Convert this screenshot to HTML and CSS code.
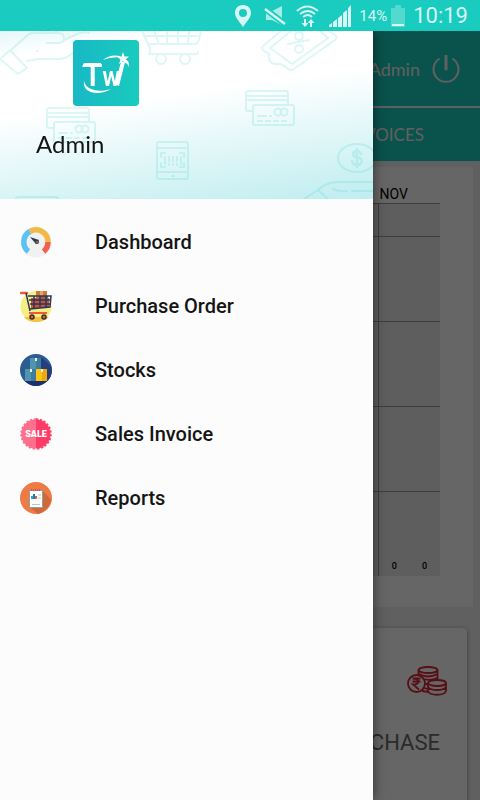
FILE: index.html
```html
<!DOCTYPE html>
<html lang="en">
<head>
<meta charset="utf-8">
<meta name="viewport" content="width=device-width, initial-scale=1">
<title>Admin</title>
<link rel="stylesheet" href="styles.css">
</head>
<body>
<div class="status">
  <svg class="pin" width="18" height="22" viewBox="0 0 18 22"><path fill-rule="evenodd" d="M9 0C4 0 1 3.600 1 8c0 5 5 9 8 14 3-5 8-9 8-14 0-4.400-3-8-8-8Zm0 4a4 4 0 1 1 0 8 4 4 0 0 1 0-8Z"/></svg>
  <svg class="mute" width="22" height="20" viewBox="0 0 22 20"><path d="M2 5h6l10-5v19L8 14H2Z" opacity=".75"/><path d="m0 2 21 16" stroke="#1accbf" stroke-width="6"/><path d="m1 3 20 15" stroke="#d6f7f4" stroke-width="2.500"/></svg>
  <svg class="wifi" width="24" height="24" viewBox="0 0 24 24"><g fill="none" stroke="#d6f7f4" stroke-width="2"><path d="M1 7q10-9 21 0M4 10q8-6 15 0M7 13q5-4 9 0"/><path d="M9 15v6M15 23v-6"/></g><path d="M5.500 19h7L9 23ZM11.500 19h7L15 15Z"/></svg>
  <svg class="signal" width="23" height="22" viewBox="0 0 23 22"><path d="M0 20l3-2v4H0ZM4 17l4-3v8H4ZM9 13l4-3v12h-4ZM14 8l4-3v17h-4ZM19 3l3-3v22h-3Z"/></svg>
  <span class="percent">14%</span>
  <svg class="battery" width="14" height="22" viewBox="0 0 14 22"><path opacity=".3" d="M4 0h6v3h4v19H0V3h4Z"/><path d="M1 19h12v2H1Z"/></svg>
  <time class="clock">10:19</time>
</div>

<div class="stage">
  <main class="page">
    <header class="topbar">
      <span>Admin</span>
      <button class="power" type="button" aria-label="Log out">
        <svg width="28" height="28" viewBox="0 0 28 28" fill="none" stroke="currentColor" stroke-width="2" stroke-linecap="round"><path d="M7 4a12.500 12.500 0 1 0 14 0"/><path d="M14 1v13" stroke-width="3"/></svg>
      </button>
    </header>
    <nav class="tabs"><a href="#invoices">INVOICES</a></nav>
    <section class="chart">
      <div class="month">NOV</div>
      <div class="plot">
        <div class="band first"></div>
        <div class="band"></div>
        <div class="band"></div>
        <div class="band"></div>
        <div class="band values"><span>0</span><span>0</span></div>
      </div>
    </section>
    <section class="card">
      <svg class="coins" width="40" height="30" viewBox="0 0 40 30" fill="none" stroke="#d92332" stroke-width="1.800">
        <ellipse cx="21" cy="4" rx="9.500" ry="3"/><path d="M11.500 4v5M30.500 4v9M12 8q9 5 18.500 0M16 13q8 2 14-1M18 18h3M17 22l4 1M15 25l7 1"/>
        <circle cx="9.500" cy="17.500" r="8.500"/><path d="M5.500 12.500h8M5.500 15.500h8M6 12.500c7 0 7 6 0 6l6 5"/>
        <ellipse cx="30" cy="17" rx="9" ry="3"/><path d="M21 17v8c2 5 16 5 18 0v-8M21 21c3 4 15 4 18 0"/>
      </svg>
      <h2>PURCHASE</h2>
    </section>
  </main>
  <div class="scrim"></div>

  <aside class="drawer">
    <header class="profile">
      <svg class="doodles" viewBox="0 0 373 168" preserveAspectRatio="xMinYMin slice" fill="none" stroke="#16c5bd" stroke-width="2" stroke-linecap="round" stroke-linejoin="round" aria-hidden="true">
        <defs>
          <g id="cards"><path d="M7 21H3q-2 0-2-2V3q0-2 2-2h38q2 0 2 2v11M1 6h42M1 10h42"/><rect x="8" y="15" width="41" height="20" rx="2"/><circle cx="33" cy="22" r="3.500"/><circle cx="39" cy="22" r="3.500"/><path d="M13 26h8M25 26h1M13 31h4M21 31h4M29 31h4M37 31h4"/></g>
        </defs>
        <g opacity=".15">
          <path d="M0 28l10-9 17 18-9 6L0 28M12 18l17-15q4-2 10-1h19q6 0 6 5t-6 5H47M38 20h-1M64 9l11-5q8-4 14-2M27 30l12-2h20q6 0 11-4l6-4M42 0q8 4 16 0"/>
          <path d="M142 0l8 17q1 4-1 6h42q7 1 7-2M149 13h46q3 0 4-4l2-9M154 0l5 13M167 0v13M178 0v13M189 0l-1 13M144 5h56"/>
          <circle cx="161" cy="28" r="5"/><circle cx="185" cy="28" r="5"/>
          <path d="M281 0l-18 15q-2 3 1 5l5 3q-2 10 9 10 5 0 10 5 3 2 6 0l41-29q3-3 0-5l-6-4M291 0l-21 17 22 16 36-26-8-7M288 13l21-4"/><circle cx="299" cy="5" r="4"/><circle cx="299" cy="18" r="4"/>
          <use href="#cards" x="46" y="76"/><use href="#cards" x="245" y="59"/><use href="#cards" x="15" y="165"/>
          <rect x="157" y="111" width="31" height="37" rx="2"/><path d="M157 117h31M157 141h31M172 145h2M161 126v-4h4M180 122h4v4M161 132v4h4M180 136h4v-4M165 126v7M169 126v4M173 126v4M177 126v4M181 126v7M169 133v1M173 133v1M177 133v1"/>
          <ellipse cx="357" cy="127" rx="19" ry="14"/><path stroke-width="2.500" d="M361 123q-1-3-4-3-4 0-4 3c0 5 9 2 9 7q-1 4-5 4-4 0-5-4M357 118v18"/>
          <path d="M304 168l14-9q8-8 21-8h34M318 159l10 9M333 158q6 3 14 2M352 160h21M345 160h1"/>
        </g>
      </svg>
      <svg class="logo" width="66" height="66" viewBox="0 0 66 66" role="img" aria-label="TW">
        <defs><linearGradient id="tile" x1="0" x2="1"><stop stop-color="#18b9c5"/><stop offset="1" stop-color="#19cbbd"/></linearGradient></defs>
        <rect width="66" height="66" rx="4" fill="url(#tile)"/>
        <text x="10" y="46" class="letters"><tspan class="letter-t">T</tspan><tspan class="letter-w">W</tspan></text>
        <path fill="#fff" d="M9 27l2-4h17v4ZM42 44l6-22h4L46 46ZM11 41c2 9 14 12 27 8-11 7-29 5-27-8ZM30 20q7-6 17-4v1.500q-9-1-17 2.500ZM52 19q5 2 4 8-2-5-7-6Z"/>
        <path fill="#fff" d="M50 12l1.500 4.500 4.500 0-3.500 3 1.500 4.500-4-3-4 3 1.500-4.500-3.500-3h4.500Z"/>
      </svg>
      <div class="name">Admin</div>
    </header>
    <nav class="menu">
      <a href="#dashboard">
        <svg viewBox="0 0 32 32"><circle cx="16" cy="16" r="15.500" fill="#f1f1f2"/><g fill="none" stroke-width="5.500"><path d="M8.500 25.500A12 12 0 0 1 10 5.500" stroke="#5bc3f3"/><path d="M10 5.500A12 12 0 0 1 28 16" stroke="#f3b947"/><path d="M28 16a12 12 0 0 1-4.500 9.500" stroke="#f2614f"/></g><path d="M10 11l9 3-3 4Z" fill="#253f52"/><circle cx="17" cy="16" r="2" fill="#253f52"/><circle cx="17" cy="16" r="1" fill="#e85c43"/></svg>
        Dashboard
      </a>
      <a href="#purchase-order">
        <svg viewBox="0 0 32 32"><circle cx="16" cy="16.500" r="15.500" fill="#f5ee82"/><path d="M4 27h25q-5 5-13 5T4 27Z" fill="#f4c341"/><path d="M16 1h11v7H16Z" fill="#c9783b"/><path d="M20 1h3v7h-3Z" fill="#e6a75b"/><path d="M11 8h18v10H11Z" fill="#cf522c"/><path d="M20 6h8v6h-8Z" fill="#ae5b32"/><path d="M1 3h6" stroke="#ee5740" stroke-width="2.500" stroke-linecap="round"/><path d="M6 3l4 18M8 6h23l-1 11-20 2M9 10h21M10 14h20M14 6v12M20 6v11M26 6v11" fill="none" stroke="#273763" stroke-width="1.500"/><path d="M9 23h18" stroke="#ed5a37" stroke-width="2"/><g fill="#e8613d" stroke="#402b32" stroke-width="1.500"><circle cx="12" cy="27" r="2"/><circle cx="24" cy="27" r="2"/></g></svg>
        Purchase Order
      </a>
      <a href="#stocks">
        <svg viewBox="0 0 32 32"><circle cx="16" cy="16" r="16" fill="#2b5d93"/><path d="M21 3l10 9q3 10-5 16H5l16-4Z" fill="#253d7d"/><path d="M5 27h22q-5 5-11 5T5 27Z" fill="#1c2f6c"/><path d="M10 4h11v11H10ZM5 15h11v12H5Z" fill="#5094ae"/><path d="M16 4h5v11h-5ZM11 15h5v12h-5Z" fill="#3e7c9c"/><path d="M16 15h11v12H16Z" fill="#fbc516"/><path d="M22 15h5v12h-5Z" fill="#f0a80a"/><path d="M15 4h2v3h-2ZM10 15h2v3h-2ZM21 15h2v3h-2Z" fill="#e6f2ee"/></svg>
        Stocks
      </a>
      <a href="#sales-invoice">
        <svg viewBox="0 0 32 32"><circle cx="16" cy="16" r="14.500" fill="#ff3c68"/><path d="M16 1.500a14.500 14.500 0 0 0 0 29Z" fill="#ff708c"/><g fill="none" stroke-width="2.500" stroke-dasharray="2.300 1.496"><path d="M16 1.500a14.500 14.500 0 0 1 0 29" stroke="#ff3c68"/><path d="M16 1.500a14.500 14.500 0 0 0 0 29" stroke="#ff708c"/></g><text x="16" y="19" class="sale">SALE</text></svg>
        Sales Invoice
      </a>
      <a href="#reports">
        <svg viewBox="0 0 32 32"><circle cx="16" cy="16" r="16" fill="#ee7b45"/><path d="M23 9l8 9q-3 11-13 14l-8-7Z" fill="#cd693b"/><rect x="9.500" y="8.500" width="13" height="17" fill="#fff" stroke="#8fa1a8"/><path d="M11 8h10" stroke="#e44c35" stroke-width="2" stroke-dasharray="1 1"/><path d="M11 17v-3h2v3Z" fill="#36a8d3"/><path d="M13 17v-5h2v5Z" fill="#1782a8"/><path d="M15 17v-3h2v3Z" fill="#e95b43"/><path d="M12 22.500h8M18 13h3M18 16h3" stroke="#bcc5c8"/></svg>
        Reports
      </a>
    </nav>
  </aside>
</div>
</body>
</html>
```
FILE: styles.css
```css
* { box-sizing: border-box; }

body {
  margin: 0;
  height: 100vh;
  display: flex;
  flex-direction: column;
  overflow: hidden;
  font-family: Roboto, "Liberation Sans", sans-serif;
  background: #f0f0f0;
}

a { color: inherit; text-decoration: none; }

.status {
  flex: none;
  height: 31px;
  padding: 0 12px;
  display: flex;
  align-items: center;
  justify-content: flex-end;
  background: #1accbf;
  color: #d6f7f4;
  fill: #d6f7f4;
}
.pin { margin-right: 12px; }
.mute { margin-right: 10px; }
.wifi { margin-right: 9px; }
.signal { margin-right: 7px; }
.percent { font-size: 15px; margin-right: 4px; }
.battery { margin-right: 8px; }
.clock { font-size: 22px; line-height: 31px; }

.stage {
  position: relative;
  flex: 1;
  min-height: 0;
  overflow: hidden;
}

.topbar {
  height: 77px;
  padding: 0 20px;
  display: flex;
  align-items: center;
  justify-content: flex-end;
  gap: 12px;
  background: #1accbf;
  border-bottom: 2px solid #f0f0f0;
  color: #f0f0f0;
  font: 18px Lato, sans-serif;
}
.power {
  display: flex;
  padding: 0;
  border: 0;
  background: none;
  color: inherit;
}
.tabs {
  height: 53px;
  padding: 0 56px;
  display: flex;
  align-items: center;
  justify-content: flex-end;
  background: #1accbf;
  color: #f0f0f0;
  font: 17px Lato, sans-serif;
}

.chart {
  margin: 6px 7px 0;
  padding: 18px 33px 31px;
  background: #fff;
}
.month {
  padding-right: 32px;
  text-align: right;
  font-size: 14px;
  line-height: 18px;
}
.plot {
  background: linear-gradient(#999, #999) right 61px top / 1px 100% no-repeat #ebebeb;
}
.band {
  height: 85px;
  border-top: 1px solid #999;
}
.band.first { height: 33px; }
.values {
  padding: 0 13px 5px;
  display: flex;
  align-items: flex-end;
  justify-content: flex-end;
  gap: 25px;
  font-size: 9px;
  font-weight: 500;
}

.card {
  margin: 21px 13px 0;
  padding: 38px 20px 60px;
  display: flex;
  flex-direction: column;
  align-items: flex-end;
  background: #fff;
  border-radius: 4px;
  box-shadow: 0 1px 4px #0006;
}
.card h2 {
  margin: 32px 7px 0;
  color: #6b6b6b;
  font-size: 22px;
  line-height: 30px;
  font-weight: 400;
}

.scrim {
  position: absolute;
  inset: 0;
  background: #0009;
}

.drawer {
  position: absolute;
  inset: 0 auto 0 0;
  width: calc(100% - 107px);
  background: #fcfcfc;
  box-shadow: 0 0 12px #0008;
}
.profile {
  position: relative;
  height: 168px;
  padding: 9px 36px 0;
  background: linear-gradient(172deg, #e4f7f8 0, #fff 12%, #fff 40%, #bfedf0 100%);
}
.doodles {
  position: absolute;
  inset: 0;
  width: 100%;
  height: 100%;
}
.logo {
  position: relative;
  display: block;
  margin-left: 37px;
}
.letters {
  fill: #fff;
  font-family: Roboto, sans-serif;
}
.letter-t {
  font-size: 32px;
  font-weight: 500;
}
.letter-w {
  font-size: 20px;
  font-weight: 700;
}
.name {
  position: relative;
  margin-top: 23px;
  color: #151515;
  font: 24px/30px Lato, sans-serif;
}

.menu { padding-top: 11px; }
.menu a {
  height: 64px;
  padding: 0 20px;
  display: flex;
  align-items: center;
  gap: 43px;
  color: #151515;
  font-size: 20px;
  font-weight: 500;
}
.menu svg {
  flex: none;
  width: 32px;
  height: 32px;
}
.sale {
  fill: #fff;
  font: 900 9px Roboto, sans-serif;
  text-anchor: middle;
}
```
